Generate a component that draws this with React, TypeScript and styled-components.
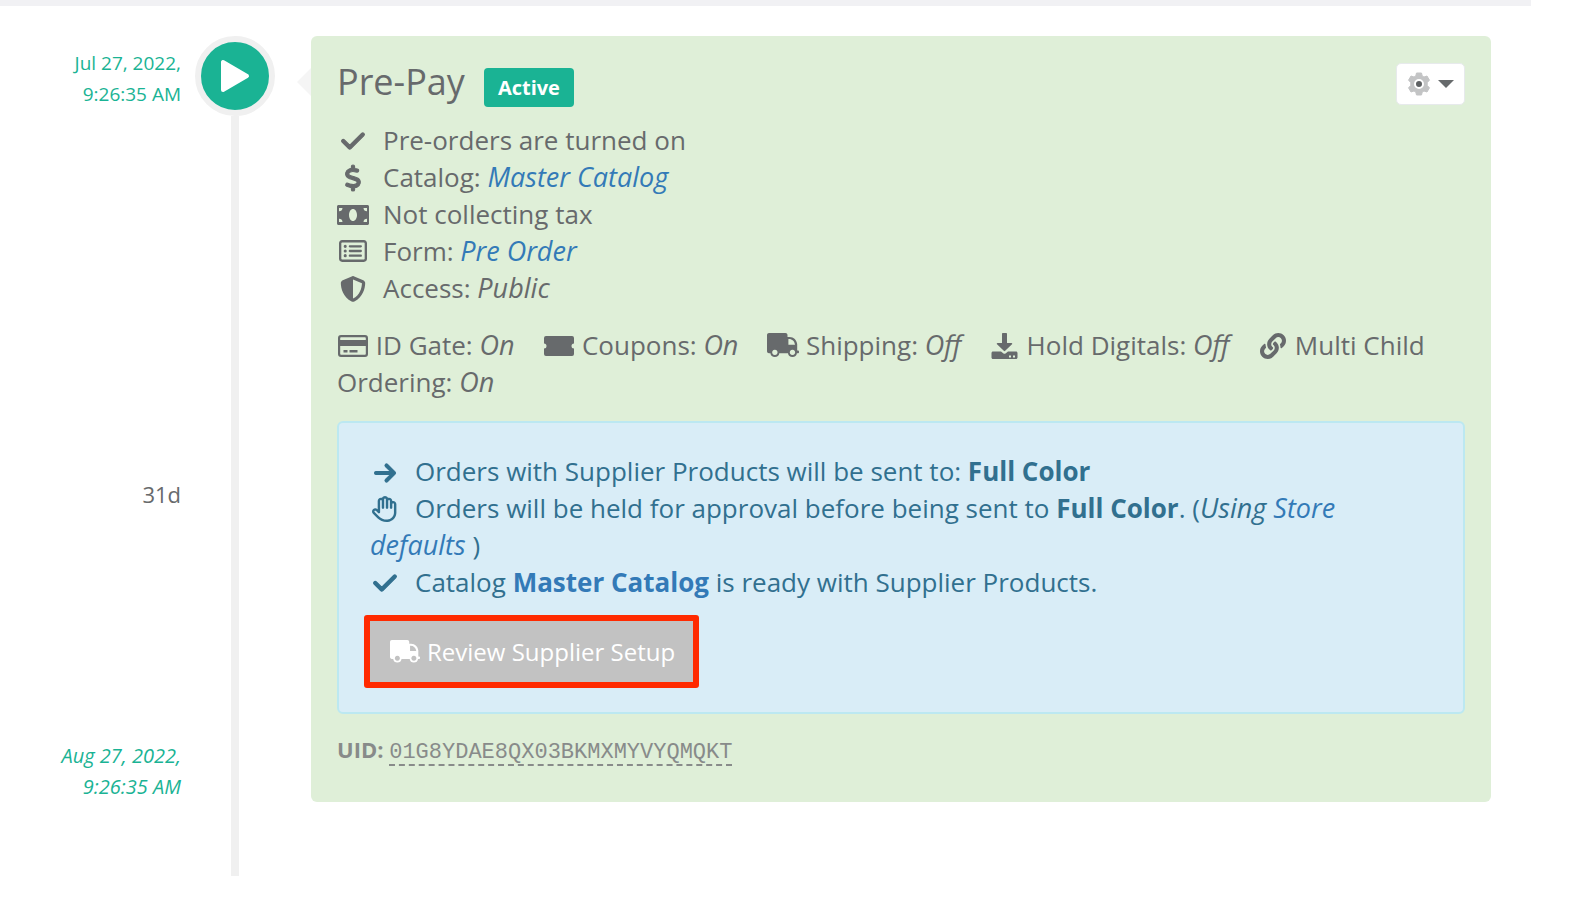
import React from 'react';
import styled, { createGlobalStyle } from 'styled-components';
import { FaLink } from 'react-icons/fa';
import {
  FaCheck, FaDollarSign, FaRegRectangleList, FaShieldHalved, FaArrowRight, FaRegHand,
} from 'react-icons/fa6';

const GlobalStyle = createGlobalStyle`
  *, *::before, *::after { box-sizing: border-box; }
  body {
    margin: 0;
    background: #fff;
    color: #676a6c;
    font-family: "Open Sans", sans-serif;
    font-size: 26px;
    line-height: 37px;
  }
  ul, p, h2 { margin: 0; padding: 0; font-weight: 400; }
  ul { list-style: none; }
  em { font-size: 27px; line-height: 1; }
`;

const Page = styled.main`
  margin-right: 41px;
  border-top: 6px solid #f1f1f4;
  padding: 30px 40px 41px 0;
`;

const Timeline = styled.section`
  display: grid;
  grid-template-columns: 181px 80px minmax(0, 1fr);
  column-gap: 14px;
`;

const Dates = styled.div`
  display: grid;
  grid-template-rows: auto 8fr auto 5fr auto;
  padding-top: 12px;
  margin-bottom: 74px;
  text-align: right;
  font-size: 22px;
  line-height: 31px;
`;

const DateText = styled.time<{ $row: number; $italic?: boolean }>`
  grid-row: ${(p) => p.$row};
  color: #1ab394;
  font-size: ${(p) => (p.$italic ? 20 : 19)}px;
  font-style: ${(p) => (p.$italic ? 'italic' : 'normal')};
`;

const Duration = styled.span`
  grid-row: 3;
`;

const Rail = styled.div`
  display: flex;
  flex-direction: column;
  align-items: center;

  &::after {
    content: '';
    flex: 1;
    width: 8px;
    background: #f0f0f0;
  }
`;

const Marker = styled.div`
  display: flex;
  align-items: center;
  justify-content: center;
  width: 80px;
  height: 80px;
  border: 6px solid #f0f0f0;
  border-radius: 50%;
  background: #1ab394;
`;

const Card = styled.article`
  position: relative;
  margin: 0 0 74px 22px;
  padding: 26px;
  border-radius: 6px;
  background: #dfefd8;

  &::before {
    content: '';
    position: absolute;
    top: 32px;
    left: -14px;
    border: 14px solid transparent;
    border-left-width: 0;
    border-right-color: #f5f5f5;
  }
`;

const CardHeader = styled.header`
  display: flex;
  justify-content: space-between;
  align-items: flex-start;
  padding-top: 1px;
  margin-bottom: 15px;
`;

const TitleGroup = styled.div`
  display: flex;
  align-items: flex-start;
  gap: 19px;
`;

const Title = styled.h2`
  font-size: 36px;
  line-height: 38px;
`;

const Badge = styled.span`
  margin-top: 5px;
  padding: 4px 14px;
  border-radius: 4px;
  background: #1ab394;
  color: #fff;
  font-size: 20px;
  font-weight: 700;
  line-height: 31px;
`;

const MenuButton = styled.button`
  display: flex;
  align-items: center;
  justify-content: space-between;
  width: 69px;
  height: 42px;
  padding: 0 10px;
  border: 1px solid #e7eaec;
  border-radius: 5px;
  background: #fff;
`;

const Icon = styled.span<{ $width?: number; $gap?: number; $heavy?: boolean }>`
  display: inline-flex;
  align-items: center;
  justify-content: center;
  width: ${(p) => p.$width ?? 32}px;
  height: 26px;
  margin-right: ${(p) => p.$gap ?? 0}px;
  vertical-align: -4px;

  svg {
    flex: none;
    overflow: visible;
    stroke-linejoin: round;
    stroke-width: ${(p) => (p.$heavy ? 22 : 0)}px;
  }
`;

const DetailList = styled.ul`
  margin-bottom: 20px;
`;

const Link = styled.a`
  color: #337ab7;
  text-decoration: none;
`;

const Options = styled.p`
  margin-bottom: 20px;
`;

const Option = styled.span`
  margin-right: 22px;
`;

const Notice = styled.section`
  padding: 30px 31px;
  border: 2px solid #bce8f1;
  border-radius: 6px;
  background: #d9edf7;
  color: #31708f;
`;

const Highlight = styled.div`
  position: relative;
  width: fit-content;
  margin-top: 20px;

  &::after {
    content: '';
    position: absolute;
    inset: -6px;
    border: 6px solid #ff2a00;
    border-radius: 3px;
    pointer-events: none;
  }
`;

const ReviewButton = styled.button`
  display: flex;
  align-items: center;
  gap: 7px;
  padding: 13px 18px 13px 20px;
  border: 0;
  background: #c2c2c2;
  color: #fff;
  font-family: inherit;
  font-size: 24px;
  line-height: 35px;
`;

const Uid = styled.p`
  margin: 20px 0 10px;
  color: #888b8a;
  font-size: 22px;
  line-height: 31px;
`;

const UidCode = styled.code`
  display: inline-block;
  border-bottom: 2px dashed #888b8a;
  font-family: "Courier New", "Liberation Mono", monospace;
  font-size: 22px;
  line-height: 22px;
`;

const CardIcon = () => (
  <svg width="32" height="26" viewBox="0 0 32 26" aria-hidden="true">
    <path fill="currentColor" fillRule="evenodd" d="M4 2h24a3 3 0 0 1 3 3v16a3 3 0 0 1-3 3H4a3 3 0 0 1-3-3V5a3 3 0 0 1 3-3zM4 4.200a1 1 0 0 0-.8.8v2h25.600V5a1 1 0 0 0-.8-.8zM3.200 13v8a1 1 0 0 0 .8.800h24a1 1 0 0 0 .8-.8v-8zM6.500 17h4v2.500h-4zM12.500 17h8v2.500h-8z" />
  </svg>
);

const MoneyIcon = () => (
  <svg width="32" height="26" viewBox="0 -3 32 26" fill="currentColor" aria-hidden="true">
    <path
      fillRule="evenodd"
      d="M1.500 0h29c.8 0 1.500.7 1.500 1.500v17c0 .8-.7 1.500-1.500 1.500h-29C.7 20 0 19.300 0 18.500v-17C0 .7.7 0 1.500 0zM2 3v3.200A3.500 3.500 0 0 0 5.500 3zM30 3h-3.500A3.500 3.500 0 0 0 30 6.200zM2 17h3.500A3.500 3.500 0 0 0 2 13.800zM30 17v-3.200a3.500 3.500 0 0 0-3.500 3.200zM16 4c-2.300 0-4 2.700-4 6s1.700 6 4 6 4-2.700 4-6-1.700-6-4-6z"
    />
  </svg>
);

const TicketIcon = () => (
  <svg width="30" height="26" viewBox="0 -3 30 26" fill="currentColor" aria-hidden="true">
    <path d="M2 0h26a2 2 0 0 1 2 2v5.500a2.500 2.500 0 0 0 0 5V18a2 2 0 0 1-2 2H2a2 2 0 0 1-2-2v-5.500a2.500 2.500 0 0 0 0-5V2a2 2 0 0 1 2-2z" />
  </svg>
);

const TruckIcon = ({ size = 32 }: { size?: number }) => (
  <svg width={size} height={size * 0.8} viewBox="0 0 640 512" fill="currentColor" aria-hidden="true">
    <path
      fillRule="evenodd"
      d="M40 0H370c22 0 40 18 40 40V80h40c86 0 146 62 154 146V352h20c9 0 16 7 16 16v20c0 9-7 16-16 16H598a90 90 0 0 1-178 0H246a90 90 0 0 1-178 0H40c-22 0-40-18-40-40V40C0 18 18 0 40 0zM428 122V236H560C550 166 504 122 440 122zM157 334a54 54 0 1 0 .1 0zM509 334a54 54 0 1 0 .1 0z"
    />
  </svg>
);

const DownloadIcon = () => (
  <svg width="27" height="26" viewBox="0 0 26 26" fill="currentColor" aria-hidden="true">
    <path d="M11.500 0h3c.6 0 1 .4 1 1v9h4.500c.7 0 1 .8.500 1.300l-6.800 6.500a1 1 0 0 1-1.400 0L5.500 11.300c-.5-.5-.2-1.300.5-1.300h4.500V1c0-.6.4-1 1-1z" />
    <path fillRule="evenodd" d="M1.500 18.500h8l2.500 2a2 2 0 0 0 2 0l2.500-2h8c.8 0 1.500.7 1.500 1.500v4.500c0 .8-.7 1.500-1.500 1.500h-23C.7 26 0 25.300 0 24.500V20c0-.8.7-1.500 1.500-1.500zM17.500 22.500h2v2h-2zM21.500 22.500h2v2h-2z" />
  </svg>
);

const GearIcon = () => (
  <svg width="24" height="24" viewBox="0 0 24 24" aria-hidden="true">
    <path
      fill="#c3c4c5"
      stroke="#c3c4c5"
      strokeLinejoin="round"
      d="M9.500 1h5l.7 3 1.800 1 3-1 2.500 4.300-2.300 2.100v3.200l2.300 2.100L20 20l-3-1-1.800 1-.7 3h-5l-.7-3L7 19l-3 1-2.500-4.300 2.300-2.100v-3.200L1.500 8.300 4 4l3 1 1.800-1z"
    />
    <circle cx="12" cy="12" r="4" fill="#5e6163" stroke="#fff" strokeWidth="2" />
  </svg>
);

export default function App() {
  return (
    <>
      <GlobalStyle />
      <Page>
        <Timeline>
          <Dates>
            <DateText $row={1}>Jul 27, 2022,<br />9:26:35 AM</DateText>
            <Duration>31d</Duration>
            <DateText $row={5} $italic>Aug 27, 2022,<br />9:26:35 AM</DateText>
          </Dates>
          <Rail>
            <Marker>
              <svg width="30" height="34" viewBox="0 0 30 34" aria-hidden="true">
                <path d="M3 3v28L27 17z" fill="#fff" stroke="#fff" strokeWidth="4" strokeLinejoin="round" />
              </svg>
            </Marker>
          </Rail>
          <Card>
            <CardHeader>
              <TitleGroup>
                <Title>Pre-Pay</Title>
                <Badge>Active</Badge>
              </TitleGroup>
              <MenuButton type="button" aria-label="Settings">
                <GearIcon />
                <svg width="16" height="8" viewBox="0 0 16 8" aria-hidden="true">
                  <path d="M0 0h16L8 8z" fill="#676a6c" />
                </svg>
              </MenuButton>
            </CardHeader>
            <DetailList>
              <li><Icon $gap={14} $heavy><FaCheck /></Icon>Pre-orders are turned on</li>
              <li><Icon $gap={14} $heavy><FaDollarSign /></Icon>Catalog: <Link href="#catalog"><em>Master Catalog</em></Link></li>
              <li><Icon $gap={14}><MoneyIcon /></Icon>Not collecting tax</li>
              <li><Icon $gap={14}><FaRegRectangleList size={28} /></Icon>Form: <Link href="#form"><em>Pre Order</em></Link></li>
              <li><Icon $gap={14}><FaShieldHalved /></Icon>Access: <em>Public</em></li>
            </DetailList>
            <Options>
              <Option><Icon><CardIcon /></Icon> ID Gate: <em>On</em></Option>{' '}
              <Option><Icon><TicketIcon /></Icon> Coupons: <em>On</em></Option>{' '}
              <Option><Icon><TruckIcon /></Icon> Shipping: <em>Off</em></Option>{' '}
              <Option><Icon $width={30}><DownloadIcon /></Icon> Hold Digitals: <em>Off</em></Option>{' '}
              <Option><Icon $width={30}><FaLink size={26} /></Icon> Multi Child Ordering: <em>On</em></Option>
            </Options>
            <Notice>
              <ul>
                <li><Icon $width={30} $gap={15} $heavy><FaArrowRight size={24} /></Icon>Orders with Supplier Products will be sent to: <b>Full Color</b></li>
                <li>
                  <Icon $width={30} $gap={15}><FaRegHand /></Icon>Orders will be held for approval before being sent to <b>Full Color</b>. (
                  <em>Using <Link href="#defaults">Store defaults</Link></em> )
                </li>
                <li>
                  <Icon $width={30} $gap={15} $heavy><FaCheck /></Icon>Catalog <Link href="#catalog"><b>Master Catalog</b></Link> is ready with Supplier Products.
                </li>
              </ul>
              <Highlight>
                <ReviewButton type="button"><TruckIcon size={30} />Review Supplier Setup</ReviewButton>
              </Highlight>
            </Notice>
            <Uid><b>UID:</b> <UidCode>01G8YDAE8QX03BKMXMYVYQMQKT</UidCode></Uid>
          </Card>
        </Timeline>
      </Page>
    </>
  );
}
